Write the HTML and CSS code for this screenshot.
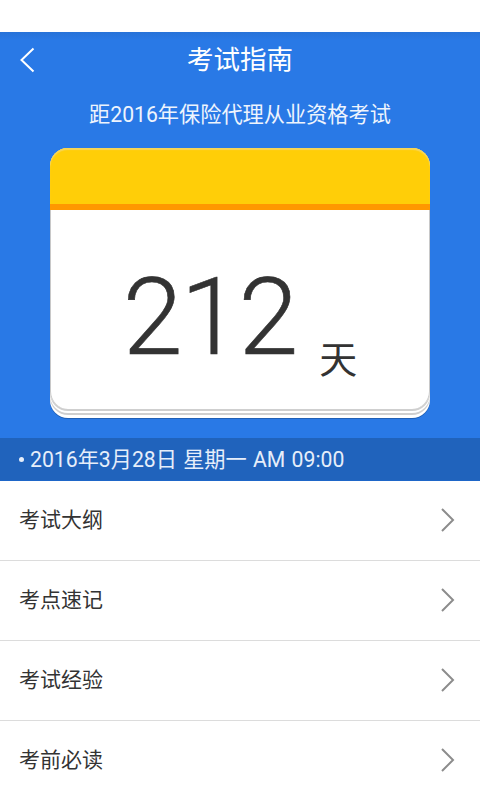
FILE: index.html
```html
<!DOCTYPE html>
<html lang="zh-CN">
<head>
  <meta charset="UTF-8" />
  <title>考试指南</title>
  <link rel="stylesheet" href="styles.css">
</head>
<body>

  <!-- Status bar area -->
  <div class="status-bar"></div>

  <!-- Blue header -->
  <header class="hero">
    <div class="title-bar">
      <svg class="back-icon" width="16" height="26" viewBox="0 0 16 26">
        <path d="M14.5 1.5 L2.5 13 L14.5 24.5" fill="none" stroke="#fff" stroke-width="2"/>
      </svg>
      <h1>考试指南</h1>
    </div>
    <p class="subtitle">距2016年保险代理从业资格考试</p>

    <div class="calendar">
      <div class="calendar-top"></div>
      <div class="calendar-body">
        <span class="days">212</span>
        <span class="days-unit">天</span>
      </div>
    </div>

    <div class="exam-date">
      <span class="dot"></span>
      <span class="exam-text">2016年3月28日 星期一 AM 09:00</span>
    </div>
  </header>

  <!-- Menu -->
  <ul class="menu">
    <li>
      <span class="menu-label">考试大纲</span>
      <svg class="arrow" width="16" height="26" viewBox="0 0 16 26"><path d="M2 2 L13 13 L2 24" fill="none" stroke="#8c8c8c" stroke-width="2"/></svg>
    </li>
    <li>
      <span class="menu-label">考点速记</span>
      <svg class="arrow" width="16" height="26" viewBox="0 0 16 26"><path d="M2 2 L13 13 L2 24" fill="none" stroke="#8c8c8c" stroke-width="2"/></svg>
    </li>
    <li>
      <span class="menu-label">考试经验</span>
      <svg class="arrow" width="16" height="26" viewBox="0 0 16 26"><path d="M2 2 L13 13 L2 24" fill="none" stroke="#8c8c8c" stroke-width="2"/></svg>
    </li>
    <li>
      <span class="menu-label">考前必读</span>
      <svg class="arrow" width="16" height="26" viewBox="0 0 16 26"><path d="M2 2 L13 13 L2 24" fill="none" stroke="#8c8c8c" stroke-width="2"/></svg>
    </li>
  </ul>

</body>
</html>
```

FILE: styles.css
```css
/* General */
html, body {
  height: 800px;
  overflow: hidden;
}

body {
  margin: 0;
  background: #fff;
  font-family: Roboto, "Noto Sans CJK SC", sans-serif;
}

.status-bar {
  height: 32px;
  background: #fff;
}

/* Header */
.hero {
  height: 449px;
  background: #2979e6;
  display: flex;
  flex-direction: column;
  color: #fff;
}

.title-bar {
  height: 56px;
  display: flex;
  align-items: center;
  justify-content: center;
  position: relative;
  background: linear-gradient(to bottom, #2772d8, #2979e6 8px);
}

.title-bar h1 {
  margin: 0 0 5px;
  font-size: 26.5px;
  font-weight: 400;
}

.back-icon {
  position: absolute;
  left: 19px;
  top: 15px;
}

.subtitle {
  margin: 13px 0 0;
  height: 27px;
  line-height: 28px;
  text-align: center;
  font-size: 21.2px;
  color: #eef4fd;
}

/* Calendar card */
.calendar {
  width: 380px;
  height: 261px;
  margin: 20px auto 0;
  border-radius: 18px;
  background: #fff;
  box-shadow: 0 2px 0 #cfcfcf, 0 4px 0 #fff, 0 6px 0 #cfcfcf, 0 9px 0 #fff, 0 10px 0 #1f5fb5;
  display: flex;
  flex-direction: column;
}

.calendar-top {
  height: 56px;
  background: #ffce08;
  border-bottom: 6px solid #ff9800;
  border-radius: 18px 18px 0 0;
  box-shadow: inset 0 2px 1px #f7d558;
}

.calendar-body {
  flex: 1;
  display: flex;
  align-items: flex-end;
  justify-content: center;
  color: #333;
  border-left: 1px solid #c8c8c8;
  border-right: 1px solid #c8c8c8;
  border-radius: 0 0 18px 18px;
  padding-bottom: 27px;
}

.days {
  font-size: 108px;
  line-height: 112px;
  font-weight: 300;
  -webkit-text-stroke: 0.6px #333;
  letter-spacing: -2px;
  margin-bottom: 9px;
}

.days-unit {
  font-size: 38px;
  line-height: 44px;
  margin-left: 23px;
  color: #333;
}

/* Exam date strip */
.exam-date {
  margin-top: auto;
  height: 43px;
  background: #2063bc;
  border-bottom: 1px solid #1e66c8;
  box-sizing: border-box;
  display: flex;
  align-items: center;
  padding-left: 19px;
  font-size: 21.2px;
  color: #e6eefa;
  gap: 6px;
}

.exam-text {
  margin-bottom: 3px;
  word-spacing: 1px;
}

.dot {
  width: 5px;
  height: 5px;
  border-radius: 50%;
  background: #e6eefa;
}

/* Menu */
.menu {
  list-style: none;
  margin: 0;
  padding: 0;
}

.menu li {
  height: 79px;
  border-bottom: 1px solid #dcdcdc;
  display: flex;
  align-items: center;
  justify-content: space-between;
  padding: 0 24px 0 19px;
  font-size: 21px;
  color: #333;
}

.menu-label {
  margin-bottom: 6px;
}

.arrow {
  margin-bottom: 2px;
}
```
